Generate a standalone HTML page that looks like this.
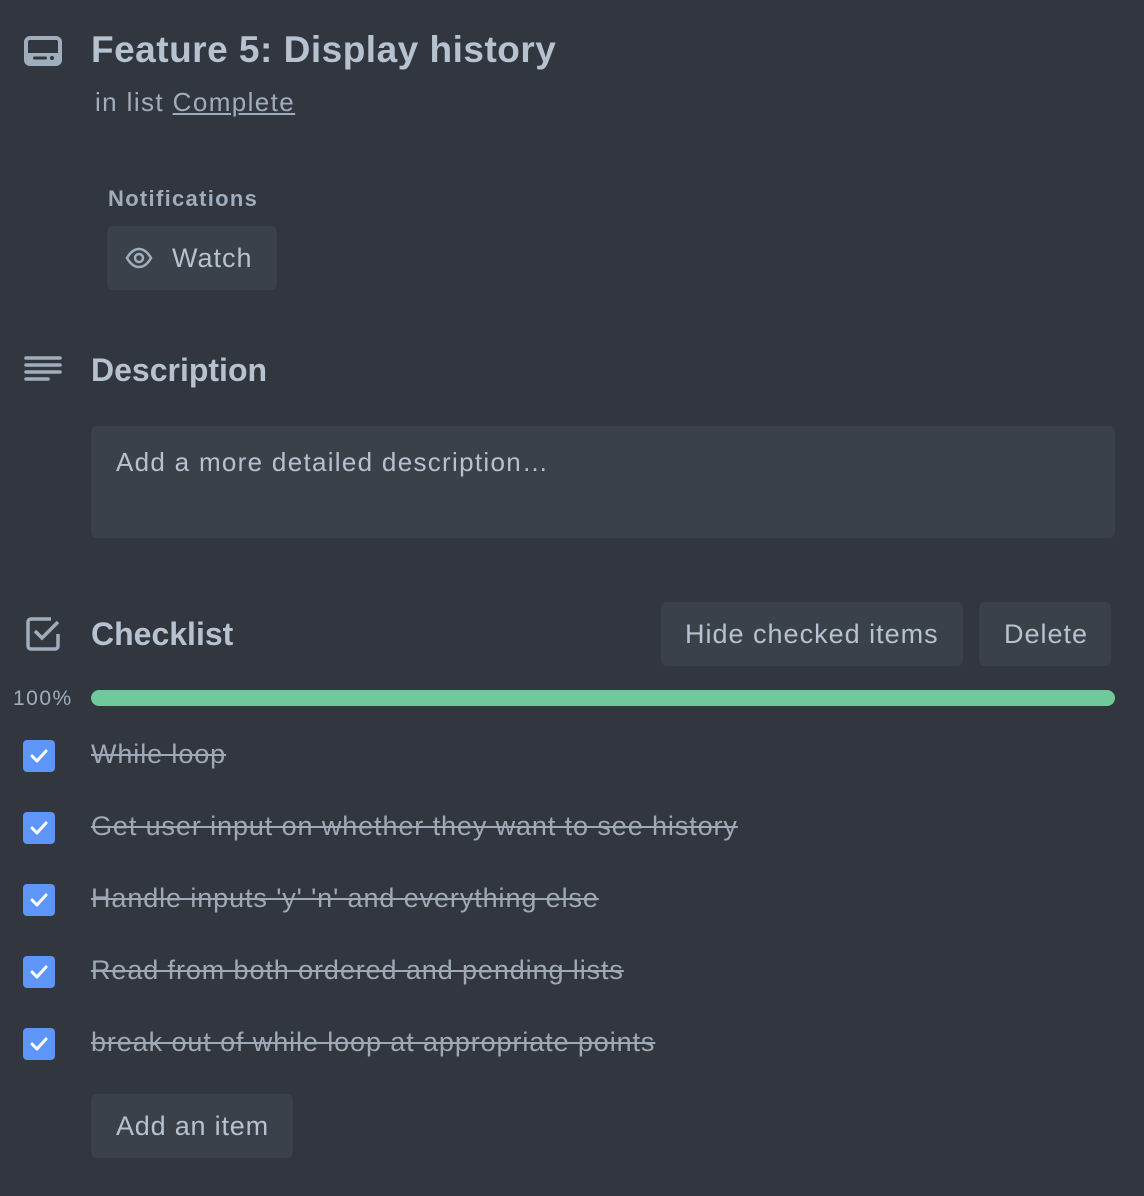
<!DOCTYPE html>
<html><head><meta charset="utf-8"><style>
body{margin:0;background:#32363e;width:1144px;height:1196px;position:relative;overflow:hidden;font-family:"Liberation Sans",sans-serif;color:#b6c2cf}
.a{position:absolute;white-space:nowrap}
.btn{position:absolute;background:#3a4149;border-radius:6px}
.cb{position:absolute;left:23px;width:32px;height:32px;background:#5f95f8;border-radius:4px}
.it{position:absolute;left:91px;font-size:27px;letter-spacing:0.9px;color:#9ea9b5;text-decoration:line-through;white-space:nowrap}
</style></head><body>
<svg class="a" style="left:24px;top:36px" width="38" height="30" viewBox="0 0 38 30"><rect x="2" y="2" width="34" height="26" rx="4" fill="none" stroke="#9fadbc" stroke-width="4"/><rect x="2" y="17" width="34" height="11" rx="3" fill="#9fadbc"/><circle cx="28" cy="22" r="2" fill="#32363e"/><rect x="9" y="20.5" width="14" height="3" rx="1.5" fill="#32363e"/></svg>
<div class="a" style="left:91px;top:29px;font-size:37px;font-weight:bold;letter-spacing:0.5px;color:#b6c2cf">Feature 5: Display history</div>
<div class="a" style="left:95px;top:87px;font-size:26px;letter-spacing:1.4px;color:#9fadbc">in list <span style="text-decoration:underline">Complete</span></div>
<div class="a" style="left:108px;top:186px;font-size:22px;font-weight:bold;letter-spacing:1.3px;color:#9fadbc">Notifications</div>
<div class="btn" style="left:107px;top:226px;width:170px;height:64px"></div>
<svg class="a" style="left:125px;top:246px" width="28" height="24" viewBox="0 0 28 24"><path d="M2 12C6 5 10 3 14 3s8 2 12 9c-4 7-8 9-12 9S6 19 2 12z" fill="none" stroke="#9fadbc" stroke-width="2.5"/><circle cx="14" cy="12" r="4" fill="none" stroke="#9fadbc" stroke-width="2.5"/></svg>
<div class="a" style="left:172px;top:243px;font-size:27px;letter-spacing:1px;color:#b6c2cf">Watch</div>
<svg class="a" style="left:24px;top:354px" width="38" height="32" viewBox="0 0 38 32"><g stroke="#9fadbc" stroke-width="3.5" stroke-linecap="round"><line x1="2" y1="4" x2="36" y2="4"/><line x1="2" y1="11" x2="36" y2="11"/><line x1="2" y1="18" x2="36" y2="18"/><line x1="2" y1="25" x2="24" y2="25"/></g></svg>
<div class="a" style="left:91px;top:352px;font-size:32px;font-weight:bold;color:#b6c2cf">Description</div>
<div class="btn" style="left:91px;top:426px;width:1024px;height:112px"></div>
<div class="a" style="left:116px;top:447px;font-size:26px;letter-spacing:1.3px;color:#b6c2cf">Add a more detailed description…</div>
<svg class="a" style="left:26px;top:616px" width="36" height="36" viewBox="0 0 36 36"><path d="M25 3H5a3 3 0 0 0-3 3v24a3 3 0 0 0 3 3h24a3 3 0 0 0 3-3V18" fill="none" stroke="#9fadbc" stroke-width="3.5"/><path d="M9 15l7 7L32 6" fill="none" stroke="#9fadbc" stroke-width="3.5"/></svg>
<div class="a" style="left:91px;top:616px;font-size:32px;font-weight:bold;color:#b6c2cf">Checklist</div>
<div class="btn" style="left:661px;top:602px;width:302px;height:64px"></div>
<div class="a" style="left:685px;top:619px;font-size:27px;letter-spacing:1px">Hide checked items</div>
<div class="btn" style="left:979px;top:602px;width:132px;height:64px"></div>
<div class="a" style="left:1004px;top:619px;font-size:27px;letter-spacing:1px">Delete</div>
<div class="a" style="left:13px;top:687px;font-size:21px;letter-spacing:1.5px;color:#9fadbc">100%</div>
<div class="a" style="left:91px;top:690px;width:1024px;height:16px;border-radius:8px;background:#6fc99a"></div>
<div class="cb" style="top:740px"></div><div class="cb" style="top:812px"></div><div class="cb" style="top:884px"></div><div class="cb" style="top:956px"></div><div class="cb" style="top:1028px"></div>
<svg class="a" style="left:23px;top:740px" width="32" height="320" viewBox="0 0 32 320"><g fill="none" stroke="#fff" stroke-width="3" stroke-linecap="round" stroke-linejoin="round"><path d="M9 16l5 5 9-10"/><path d="M9 88l5 5 9-10"/><path d="M9 160l5 5 9-10"/><path d="M9 232l5 5 9-10"/><path d="M9 304l5 5 9-10"/></g></svg>
<div class="it" style="top:739px">While loop</div>
<div class="it" style="top:811px">Get user input on whether they want to see history</div>
<div class="it" style="top:883px">Handle inputs 'y' 'n' and everything else</div>
<div class="it" style="top:955px">Read from both ordered and pending lists</div>
<div class="it" style="top:1027px">break out of while loop at appropriate points</div>
<div class="btn" style="left:91px;top:1094px;width:202px;height:64px"></div>
<div class="a" style="left:116px;top:1111px;font-size:27px;letter-spacing:0.8px">Add an item</div>
</body></html>
